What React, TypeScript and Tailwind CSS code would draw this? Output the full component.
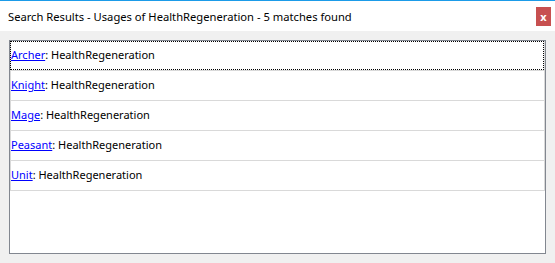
const items = ["Archer", "Knight", "Mage", "Peasant", "Unit"];

export default function App() {
  return (
    <div
      className="w-[555px] h-[263px] flex flex-col bg-[#f0f0f0] border-t border-[#1b9be8] overflow-hidden"
      style={{ fontFamily: '"Noto Sans", sans-serif' }}
    >
      {/* title bar */}
      <div className="h-[30px] bg-white flex items-center justify-between pl-2 pr-1 shrink-0">
        <span className="text-[11.2px] text-black pt-[2px]">
          Search Results - Usages of HealthRegeneration - 5 matches found
        </span>
        <button className="w-[15px] h-[19px] bg-[#c75050] text-white text-[11px] font-bold leading-none flex items-center justify-center">
          x
        </button>
      </div>

      {/* results list */}
      <div className="flex-1 p-[9px]">
        <div className="h-full bg-white border border-[#828790] flex flex-col">
          {items.map((name, i) => (
            <div
              key={name}
              className="h-[30px] shrink-0 border-x border-b border-[#d9d9d9] flex"
            >
              <div
                className={
                  "flex-1 flex items-center text-[11px] text-black -ml-px " +
                  (i === 0 ? "border border-dotted border-black" : "border border-transparent")
                }
              >
                <span className="text-[#0000ff] underline">{name}</span>
                <span>: HealthRegeneration</span>
              </div>
            </div>
          ))}
        </div>
      </div>
    </div>
  );
}
